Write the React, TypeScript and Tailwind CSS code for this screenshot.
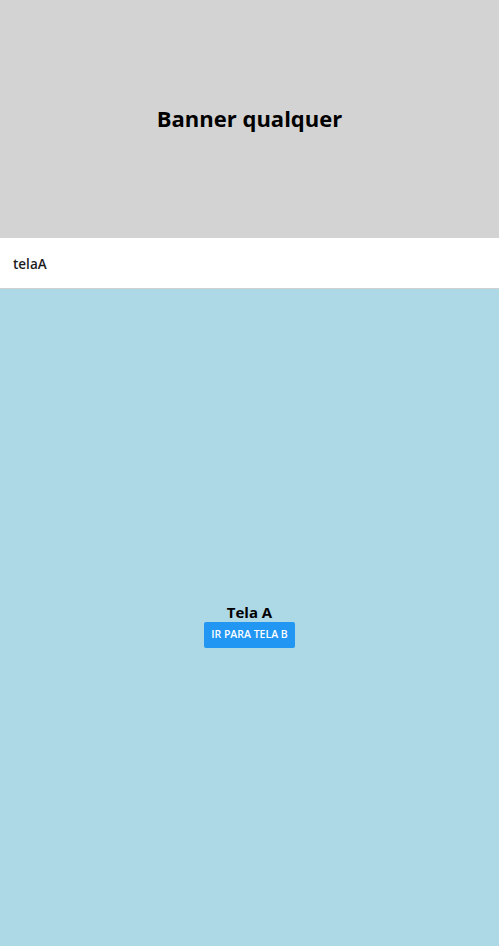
export default function App() {
  return (
    <div className="flex h-[946px] flex-col font-['Open_Sans',sans-serif]">
      {/* Banner */}
      <div className="flex h-[238px] flex-none items-center justify-center bg-[#d3d3d3] pb-[2px]">
        <h1 className="text-[22px] font-bold text-black">Banner qualquer</h1>
      </div>

      {/* Header */}
      <div className="flex h-[51px] flex-none items-center border-b border-[#d0d0d0] bg-white px-[13px] pt-[3px]">
        <span className="text-[13.5px] font-semibold text-[#1c1c1e]">telaA</span>
      </div>

      {/* Screen */}
      <div className="flex flex-1 flex-col items-center justify-center bg-[#add8e6] pt-[16px]">
        <span className="text-[15px] font-bold leading-[18px] text-black">Tela A</span>
        <button className="mt-[1px] h-[26px] rounded-[2px] bg-[#2196f3] px-[7px] text-[10.5px] font-semibold text-white">
          IR PARA TELA B
        </button>
      </div>
    </div>
  );
}
